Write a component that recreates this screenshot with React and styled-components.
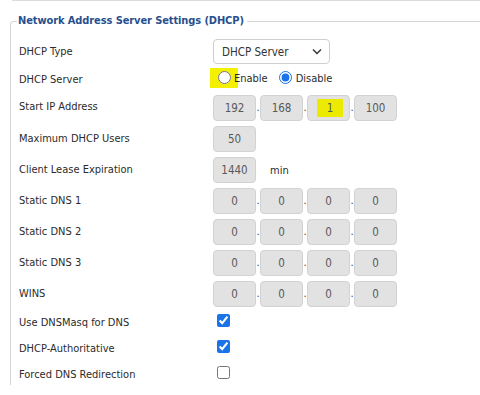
import React from "react";
import styled, { createGlobalStyle } from "styled-components";

const Global = createGlobalStyle`
  html, body { margin: 0; padding: 0; background: #fff; }
  body {
    font-family: "DejaVu Sans Condensed", "DejaVu Sans", sans-serif;
    font-stretch: condensed;
    font-size: 11px;
    color: #2b2b2b;
    overflow: hidden;
  }
`;

const TopRule = styled.div`
  margin-left: 12px;
  border-top: 1px solid #dcdcdc;
`;

const Fieldset = styled.fieldset`
  margin: 12px 0 0 10px;
  padding: 7px 0 0 6px;
  border: 1px solid #d6d6d6;
  border-right: none;
  border-bottom: none;
  border-top-left-radius: 4px;
  min-height: 360px;
`;

const Legend = styled.legend`
  padding: 0 3px 0 1px;
  font-size: 11px;
  line-height: 16px;
  letter-spacing: -0.1px;
  font-weight: bold;
  color: #28508e;
`;

const Row = styled.div`
  display: grid;
  grid-template-columns: 196px 1fr;
  align-items: center;
  height: ${(p) => p.$h}px;
  margin-top: ${(p) => p.$mt || 0}px;
`;

const Label = styled.div`
  padding-left: 2px;
  padding-top: ${(p) => Math.max(p.$down || 0, 0)}px;
  padding-bottom: ${(p) => Math.max(-(p.$down || 0), 0)}px;
  white-space: nowrap;
`;

const Field = styled.div`
  display: flex;
  align-items: center;
  height: 100%;
`;

const SelectWrap = styled.div`
  position: relative;
  display: inline-flex;
`;

const Select = styled.select`
  appearance: none;
  width: 117px;
  height: 25px;
  border: 1px solid #cfcfcf;
  border-radius: 4px;
  background: #fff;
  padding: 0 0 0 8px;
  font-family: inherit;
  font-stretch: condensed;
  font-size: 11.5px;
  color: #333;
`;

const Chevron = styled.svg`
  position: absolute;
  right: 8px;
  top: 9px;
  width: 10px;
  height: 7px;
  pointer-events: none;
`;

const RadioGroup = styled.div`
  display: flex;
  align-items: center;
  margin-left: -3px;
`;

const Mark = styled.span`
  display: inline-flex;
  align-items: center;
  width: 28px;
  height: 20px;
  padding-left: 8px;
  box-sizing: border-box;
  background: #f3f000;
`;

const Radio = styled.input.attrs({ type: "radio" })`
  margin: 0;
  width: 13px;
  height: 13px;
  accent-color: #1a73e8;
`;

const RadioText = styled.span`
  margin-left: ${(p) => p.$ml}px;
  margin-right: ${(p) => p.$mr || 0}px;
  position: relative;
  padding-top: 2px;
`;

const Box = styled.div`
  width: 43px;
  height: 26px;
  box-sizing: border-box;
  border: 1px solid #d2d2d2;
  border-radius: 4px;
  background: #e2e2e2;
  color: #595959;
  display: flex;
  align-items: center;
  justify-content: center;
  font-size: 11.5px;
`;

const Hi = styled.span`
  display: inline-flex;
  align-items: center;
  justify-content: center;
  width: 26px;
  height: 18px;
  margin-left: 3px;
  background: #ecea00;
`;

const Dot = styled.span`
  width: 4px;
  text-align: center;
  align-self: flex-end;
  line-height: 12px;
  padding-bottom: 7px;
  color: #444;
`;

const Unit = styled.span`
  margin-left: 14px;
`;

const Check = styled.input.attrs({ type: "checkbox" })`
  margin: 0 0 0 4px;
  width: 13px;
  height: 13px;
  accent-color: #1a73e8;
`;

const Ip = ({ parts, hi }) => (
  <Field>
    {parts.map((p, i) => (
      <React.Fragment key={i}>
        {i > 0 && <Dot>.</Dot>}
        <Box>{hi === i ? <Hi>{p}</Hi> : p}</Box>
      </React.Fragment>
    ))}
  </Field>
);

export default function App() {
  return (
    <>
      <Global />
      <TopRule />
      <Fieldset>
        <Legend>Network Address Server Settings (DHCP)</Legend>
        <Row $h={31}>
          <Label $down={0}>DHCP Type</Label>
          <Field>
            <SelectWrap>
              <Select defaultValue="server">
                <option value="server">DHCP Server</option>
                <option value="forwarder">DHCP Forwarder</option>
              </Select>
              <Chevron viewBox="0 0 10 7">
                <path d="M1 1.5 L5 5.5 L9 1.5" fill="none" stroke="#333" strokeWidth="1.4" />
              </Chevron>
            </SelectWrap>
          </Field>
        </Row>
        <Row $h={21}>
          <Label $down={4}>DHCP Server</Label>
          <RadioGroup>
            <Mark>
              <Radio name="dhcp" />
            </Mark>
            <RadioText $ml={-4} $mr={11}>Enable</RadioText>
            <Radio name="dhcp" defaultChecked />
            <RadioText $ml={4}>Disable</RadioText>
          </RadioGroup>
        </Row>
        <Row $h={26} $mt={7}>
          <Label $down={-3}>Start IP Address</Label>
          <Ip parts={["192", "168", "1", "100"]} hi={2} />
        </Row>
        <Row $h={26} $mt={5}>
          <Label $down={-1}>Maximum DHCP Users</Label>
          <Field>
            <Box>50</Box>
          </Field>
        </Row>
        <Row $h={26} $mt={5}>
          <Label $down={-1}>Client Lease Expiration</Label>
          <Field>
            <Box>1440</Box>
            <Unit>min</Unit>
          </Field>
        </Row>
        <Row $h={26} $mt={5}>
          <Label $down={-1}>Static DNS 1</Label>
          <Ip parts={["0", "0", "0", "0"]} />
        </Row>
        <Row $h={26} $mt={5}>
          <Label $down={-1}>Static DNS 2</Label>
          <Ip parts={["0", "0", "0", "0"]} />
        </Row>
        <Row $h={26} $mt={5}>
          <Label $down={-1}>Static DNS 3</Label>
          <Ip parts={["0", "0", "0", "0"]} />
        </Row>
        <Row $h={26} $mt={5}>
          <Label $down={-1}>WINS</Label>
          <Ip parts={["0", "0", "0", "0"]} />
        </Row>
        <Row $h={26}>
          <Label $down={5}>Use DNSMasq for DNS</Label>
          <Field>
            <Check defaultChecked />
          </Field>
        </Row>
        <Row $h={26}>
          <Label $down={5}>DHCP-Authoritative</Label>
          <Field>
            <Check defaultChecked />
          </Field>
        </Row>
        <Row $h={26}>
          <Label $down={5}>Forced DNS Redirection</Label>
          <Field>
            <Check />
          </Field>
        </Row>
      </Fieldset>
    </>
  );
}
